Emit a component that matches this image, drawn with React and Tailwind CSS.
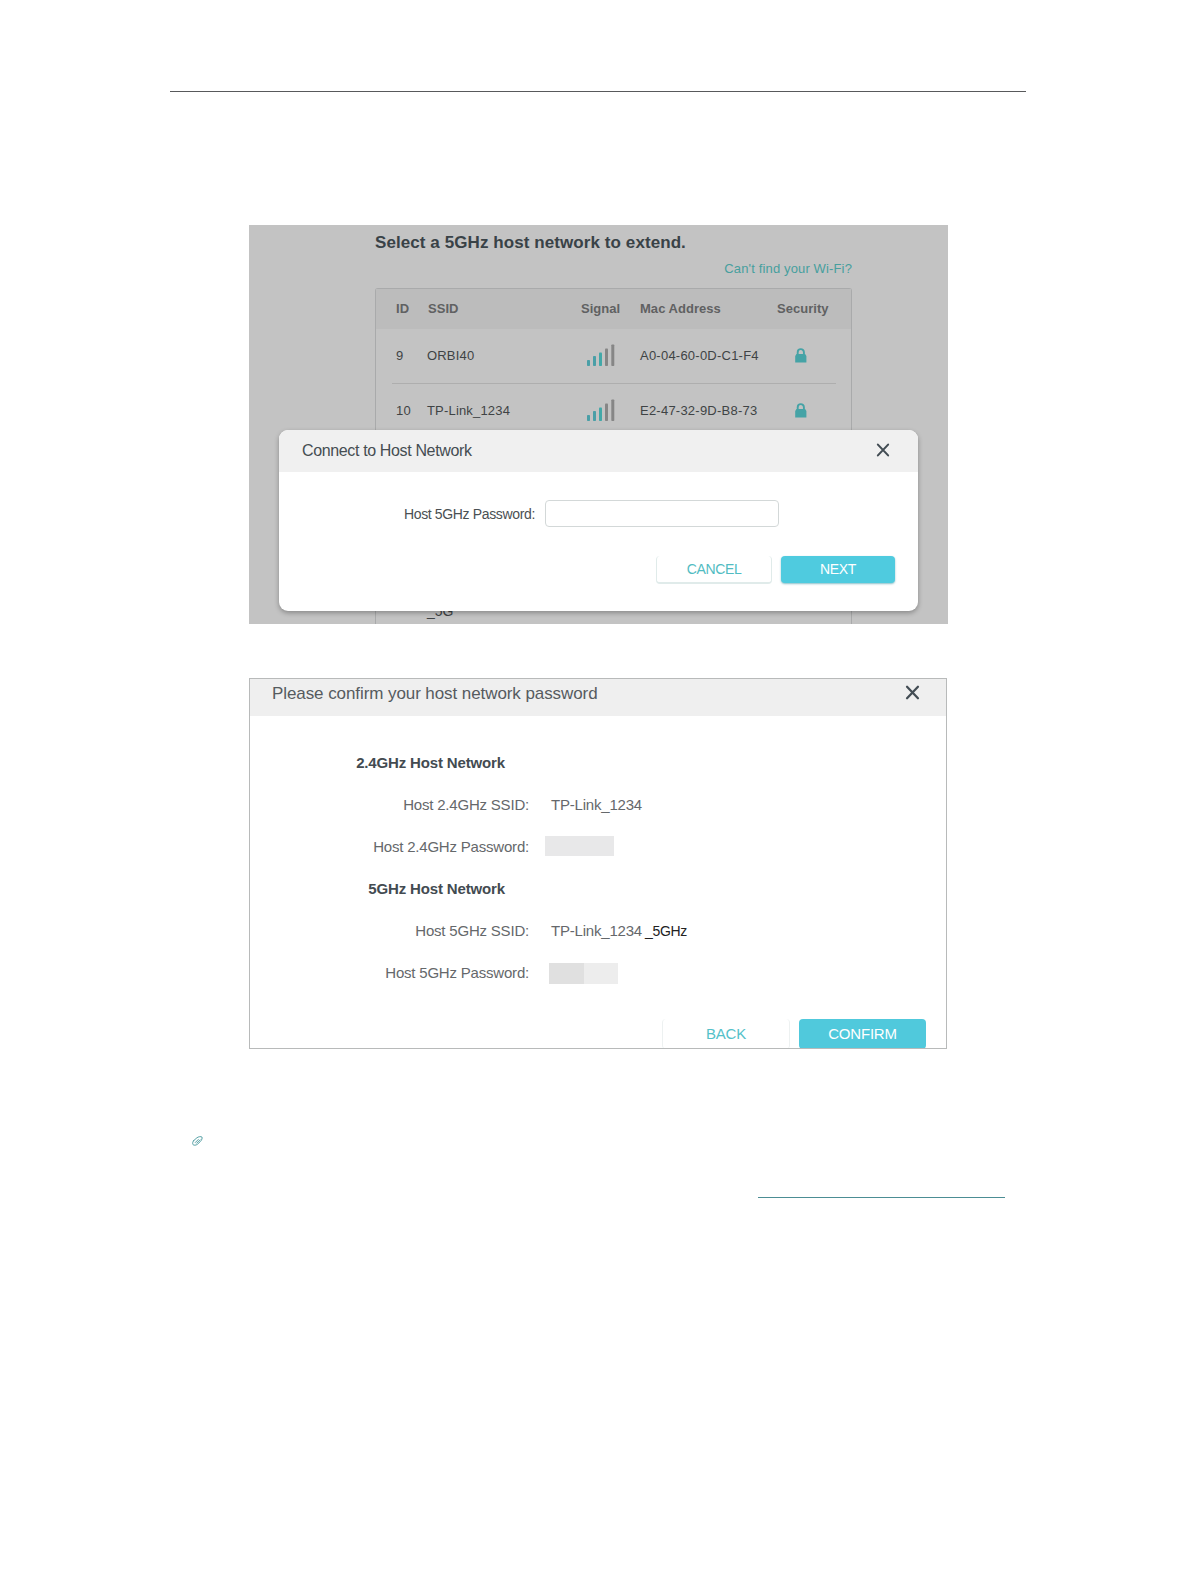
import React from 'react'

const networks = [
  { id: "9", ssid: "ORBI40", mac: "A0-04-60-0D-C1-F4" },
  { id: "10", ssid: "TP-Link_1234", mac: "E2-47-32-9D-B8-73" },
];

const SignalIcon = () => (
  <svg className="ml-[6px] mb-[1px]" width="28" height="23" viewBox="0 0 28 23" fill="none">
    <rect x="0" y="16" width="3" height="6" rx="0.8" fill="#4a9fa7" />
    <rect x="6" y="12" width="3" height="10" rx="0.8" fill="#4a9fa7" />
    <rect x="12" y="8.5" width="3" height="13.5" rx="0.8" fill="#42a8a8" />
    <rect x="18" y="4.5" width="3" height="17.5" rx="0.8" fill="#868686" />
    <rect x="24.3" y="0.5" width="3" height="21.5" rx="0.8" fill="#868686" />
  </svg>
);

const LockIcon = () => (
  <svg className="ml-[18px] mb-[1px]" width="12" height="15" viewBox="0 0 12 15" fill="none">
    <path d="M2.7 7V4.2a3.1 3.1 0 0 1 6.2 0V7" stroke="#45a3a6" strokeWidth="1.9" />
    <path d="M1.5 6H10.1L11.4 8V14.5H.2V8Z" fill="#45a3a6" />
  </svg>
);

const CloseIcon = ({ className }) => (
  <svg className={className} viewBox="0 0 14 14" fill="none">
    <path d="M1.9 1.6 12.1 12.4M12.1 1.6 1.9 12.4" stroke="#434d54" strokeWidth="2.1" strokeLinecap="round" />
  </svg>
);

const PaperclipIcon = () => (
  <svg className="ml-[23px]" width="11" height="10" viewBox="0 0 11 10" fill="none">
    <path
      d="M1.6 4.7 4.9 1.8C6.500 .6 8.900 .3 9.900 1 10.600 2 9.700 4.100 8.400 5.500L5.400 8.300C4 9.400 1.700 9.500 .9 8.500 .4 7.300 .7 5.700 1.600 4.700ZM3.300 6.500 6.300 3.500M4.700 7.200 8 3.900"
      stroke="#3a9096"
      strokeWidth="0.85"
      strokeLinecap="round"
    />
  </svg>
);

const Field = ({ label, children }) => (
  <div className="flex h-[42px] items-center">
    <div className="w-[279px] text-right whitespace-nowrap">{label}</div>
    {children}
  </div>
);

const NetworkTable = () => (
  <div className="ml-[126px] w-[477px] h-[336px] rounded-t-[3px] border border-b-0 border-[#a9aaab] text-[13px] text-[#3f4345]">
    <div className="grid grid-cols-[32px_153px_59px_137px_1fr] items-center h-10 pl-5 bg-[#bcbcbc] font-bold tracking-[0.04px] text-[#606162]">
      <span>ID</span>
      <span>SSID</span>
      <span>Signal</span>
      <span>Mac Address</span>
      <span>Security</span>
    </div>
    {networks.map((item, index) => (
      <div
        key={index}
        className="grid grid-cols-[32px_153px_59px_137px_1fr] items-center h-[55px] ml-4 mr-[15px] pl-1 border-b border-[#aeaeae] tracking-[0.18px]"
      >
        <span>{item.id}</span>
        <span className="-ml-px">{item.ssid}</span>
        <SignalIcon />
        <span className="whitespace-nowrap tracking-[0.23px]">{item.mac}</span>
        <LockIcon />
      </div>
    ))}
    <div className="pl-[51px] pt-[162px] text-[14px]">_5G</div>
  </div>
);

const PasswordDialog = () => (
  <div className="absolute left-[30px] top-[205px] w-[639px] h-[181px] rounded-[9px] bg-white overflow-hidden shadow-[0_2px_5px_rgba(0,0,0,0.3)] text-[#4a5053]">
    <div className="flex items-center justify-between h-[42px] pl-[23px] pr-[28px] bg-[#f0f0f0]">
      <h2 className="text-[16px] tracking-[-0.36px] text-[#454d52]">Connect to Host Network</h2>
      <CloseIcon className="w-[14px] h-[14px] mb-[2px]" />
    </div>
    <div className="flex items-center mt-7">
      <label className="w-[256px] pt-[2px] text-right text-[14px] tracking-[-0.35px] whitespace-nowrap">Host 5GHz Password:</label>
      <input className="ml-[10px] w-[234px] h-[27px] rounded-[4px] border border-[#d3d8d8] bg-white" />
    </div>
    <div className="flex justify-end gap-[9px] mt-[29px] pr-[23px] text-[14px] tracking-[-0.35px]">
      <button className="w-[116px] h-[28px] rounded-[4px] border-x border-b-2 border-[#e0ebea] text-[#51bcc2]">CANCEL</button>
      <button className="w-[114px] h-[27px] rounded-[4px] bg-[#4fcbdf] text-white shadow-[0_1px_2px_rgba(60,150,165,0.6)]">NEXT</button>
    </div>
  </div>
);

const ConfirmPanel = () => (
  <div className="mt-[54px] ml-[249px] w-[698px] h-[371px] border border-[#b8baba] bg-white overflow-hidden text-[15px] tracking-[-0.2px] text-[#65686b]">
    <div className="flex justify-between h-[37px] pl-[22px] pr-[26px] bg-[#efefef]">
      <h2 className="mt-[3px] text-[17px] leading-6 tracking-[-0.08px] text-[#565b5f]">Please confirm your host network password</h2>
      <CloseIcon className="mt-[6px] w-[15px] h-[15px]" />
    </div>
    <div className="mt-[26px]">
      <div className="flex h-[42px] items-center w-[255px] justify-end font-bold tracking-[-0.15px] text-[#434b51] whitespace-nowrap">2.4GHz Host Network</div>
      <Field label="Host 2.4GHz SSID:">
        <span className="ml-[22px]">TP-Link_1234</span>
      </Field>
      <Field label="Host 2.4GHz Password:">
        <div className="ml-[16px] mb-[2px] w-[69px] h-5 bg-[#e8e8e9]" />
      </Field>
      <div className="flex h-[42px] items-center w-[255px] justify-end font-bold tracking-[-0.15px] text-[#434b51] whitespace-nowrap">5GHz Host Network</div>
      <Field label="Host 5GHz SSID:">
        <span className="ml-[22px]">TP-Link_1234</span>
        <span className="ml-[3px] text-[14px] tracking-[-0.3px] text-[#222222]">_5GHz</span>
      </Field>
      <Field label="Host 5GHz Password:">
        <div className="ml-[20px] flex w-[69px] h-[21px] bg-[#ededed]">
          <div className="w-[35px] bg-[#e0e0e0]" />
        </div>
      </Field>
    </div>
    <div className="flex justify-end gap-[9px] mt-[25px] pr-5">
      <button className="w-[128px] h-[30px] rounded-[4px] border-x border-[#edf1f1] text-[#54c1c9]">BACK</button>
      <button className="w-[127px] h-[30px] rounded-[4px] bg-[#50c9dc] text-white">CONFIRM</button>
    </div>
  </div>
);

const App = () => {
  return (
    <div className="w-[1196px] h-[1582px] bg-white overflow-hidden font-['Liberation_Sans',Arial,sans-serif]">
      <div className="mt-[91px] ml-[170px] w-[856px] h-px bg-[#58595b]" />

      <div className="relative mt-[133px] ml-[249px] w-[699px] h-[399px] bg-[#c3c3c3] overflow-hidden">
        <h1 className="ml-[126px] pt-[6px] h-[34px] text-[17px] leading-6 font-bold tracking-[0.08px] text-[#394247]">
          Select a 5GHz host network to extend.
        </h1>
        <div className="h-[29px] pr-[96px] text-right text-[13px] leading-5 tracking-[0.14px] text-[#479f9e]">
          Can't find your Wi-Fi?
        </div>
        <NetworkTable />
        <PasswordDialog />
      </div>

      <ConfirmPanel />

      <div className="mt-[87px] ml-[169px]">
        <PaperclipIcon />
      </div>
      <div className="mt-[51px] ml-[758px] w-[247px] h-px bg-[#4c8d94]" />
    </div>
  );
};

export default App;
